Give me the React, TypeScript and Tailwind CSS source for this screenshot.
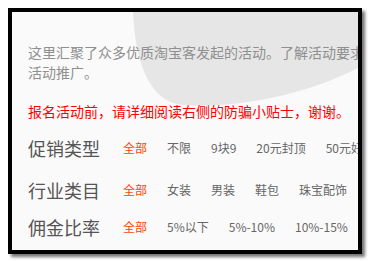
import React from "react";

const rows = [
  { label: "促销类型", items: ["不限", "9块9", "20元封顶", "50元好货"] },
  { label: "行业类目", items: ["女装", "男装", "鞋包", "珠宝配饰"] },
  { label: "佣金比率", items: ["5%以下", "5%-10%", "10%-15%"] },
];

export default function App() {
  return (
    <div className="w-[370px] h-[261px] bg-white pt-[8px] pl-[8px]" style={{ fontFamily: '"Noto Sans CJK SC", "Noto Sans", sans-serif' }}>
      <div className="relative w-[354px] h-[246px] border-[4px] border-black bg-[#fafafa] overflow-hidden shadow-[3px_3px_3px_rgba(0,0,0,0.55)]">
        <svg className="absolute inset-0" width="346" height="238" viewBox="0 0 346 238">
          <path d="M121,0 C123,45 135,90 171,93 C230,97 300,80 346,56 L346,0 Z" fill="#e6e6e6" />
        </svg>
        <div className="relative pl-[16px] pt-[30px] whitespace-nowrap">
          <p className="text-[14px] leading-[20px] text-[#8f8f8f]">
            这里汇聚了众多优质淘宝客发起的活动。了解活动要求后，<br />活动推广。
          </p>
          <p className="mt-[19px] text-[14px] leading-[20px] text-[#ff0000]">
            报名活动前，请详细阅读右侧的防骗小贴士，谢谢。
          </p>
          <div className="mt-[13px] flex flex-col">
            {rows.map((r, i) => (
              <div key={r.label} className={`flex items-center h-[28px] ${i === 1 ? "mt-[14px]" : i === 2 ? "mt-[9px]" : ""}`}>
                <span className="w-[95px] shrink-0 text-[18px] leading-[28px] text-[#555555]">{r.label}</span>
                <div className="flex items-center gap-[20px] text-[12px] leading-[28px] text-[#666666]">
                  <span className="text-[#ff4400]">全部</span>
                  {r.items.map((it) => (
                    <span key={it}>{it}</span>
                  ))}
                </div>
              </div>
            ))}
          </div>
        </div>
      </div>
    </div>
  );
}
